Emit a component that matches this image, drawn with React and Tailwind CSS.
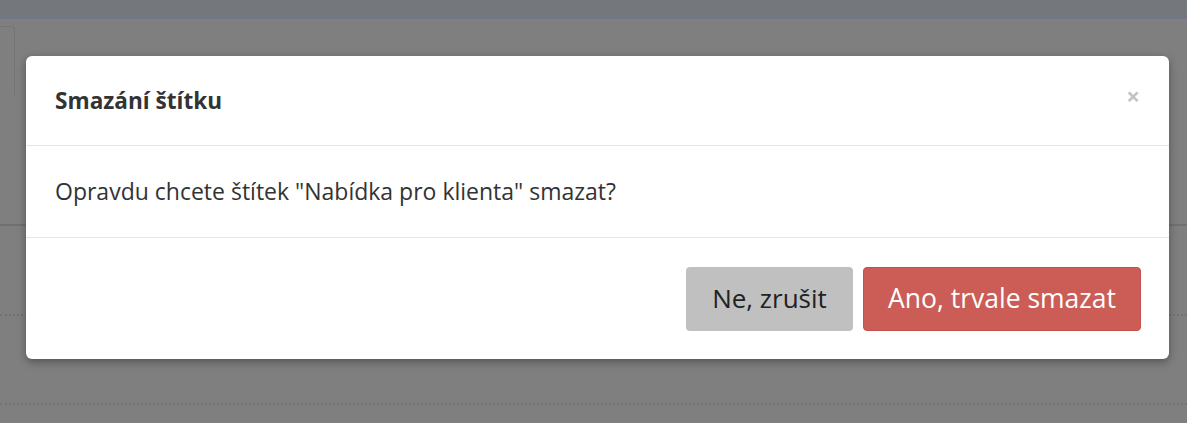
import React from 'react';

export default function App() {
  return (
    <div className="relative h-[423px] w-[1187px] overflow-hidden bg-[#7f7f7f] font-['Open_Sans',sans-serif]">
      {/* page behind the overlay */}
      <div className="h-[19px] bg-[#74777c] border-b border-[#6c7792]" />
      <div className="flex flex-col">
        <div className="mt-[7px] h-[69px] w-[15px] rounded-tr-[4px] border-r border-t border-[#747474]" />
        <div className="mt-[129px] h-[2px] w-full bg-[#717171]" />
        <div className="mt-[88px] w-full border-t-2 border-dotted border-[#737373]" />
        <div className="mt-[87px] w-full border-t-2 border-dotted border-[#737373]" />
      </div>

      {/* modal */}
      <div className="absolute left-[26px] top-[56px] w-[1143px] rounded-[6px] bg-white shadow-[0_3px_9px_rgba(0,0,0,0.35)]">
        <div className="flex h-[90px] items-center justify-between border-b border-[#e5e5e5] pl-[29px] pr-[29px]">
          <h4 className="mt-[1px] text-[22.6px] font-bold text-[#333]">Smazání štítku</h4>
          <button className="-mt-[9px] text-[24px] font-bold leading-none text-[#c4c4c4]">×</button>
        </div>
        <div className="flex h-[92px] items-center border-b border-[#e5e5e5] px-[29px]">
          <p className="text-[23px] text-[#333]">Opravdu chcete štítek "Nabídka pro klienta" smazat?</p>
        </div>
        <div className="flex h-[121px] items-center justify-end gap-[10px] px-[28px]">
          <button className="h-[64px] w-[167px] rounded-[4px] bg-[#c0c0c0] text-[26px] text-[#222]">Ne, zrušit</button>
          <button className="h-[64px] w-[278px] rounded-[4px] border border-[#c2524b] bg-[#cb5d56] text-[26.5px] text-white">Ano, trvale smazat</button>
        </div>
      </div>
    </div>
  );
}
